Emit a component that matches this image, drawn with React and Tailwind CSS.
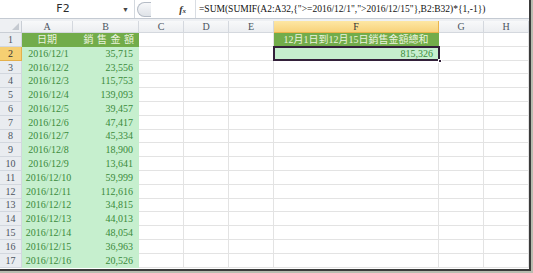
import React from 'react'

const cols = [
  { key: 'A', w: 'w-[51px]' },
  { key: 'B', w: 'w-[66px]' },
  { key: 'C', w: 'w-[45px]' },
  { key: 'D', w: 'w-[45px]' },
  { key: 'E', w: 'w-[45px]' },
  { key: 'F', w: 'w-[165px]' },
  { key: 'G', w: 'w-[45px]' },
  { key: 'H', w: 'w-[45px]' },
]

const sales = [
  35715, 23556, 115753, 139093, 39457, 47417, 45334, 18900,
  13641, 59999, 112616, 34815, 44013, 48054, 36963, 20526,
]

const formula = '=SUM(SUMIF(A2:A32,{">=2016/12/1",">2016/12/15"},B2:B32)*{1,-1})'

const serif = { fontFamily: '"Liberation Serif", "Noto Sans CJK TC", serif' }
const cjk = { fontFamily: '"Liberation Serif", "Noto Sans CJK TC", "Noto Sans CJK SC", serif' }

function Cell({ col, row }) {
  const base = `${col.w} h-full shrink-0 flex items-center border-r border-b`
  if (row === 1) {
    if (col.key === 'A')
      return (
        <div className={`${base} justify-center bg-[#72ac4a] border-[#72ac4a] text-[#eaf3de] text-[10px]`} style={cjk}>日期</div>
      )
    if (col.key === 'B')
      return (
        <div className={`${base} justify-end pr-[4px] bg-[#72ac4a] border-[#72ac4a] text-[#eaf3de] text-[10px]`} style={cjk}>
          <span className="tracking-[3.5px] mr-[-3.5px]">銷售金額</span>
        </div>
      )
    if (col.key === 'F')
      return (
        <div className={`${base} justify-center bg-[#72ac4a] border-[#72ac4a] text-[#eaf3de] text-[10px]`} style={cjk}>12月1日到12月15日銷售金額總和</div>
      )
  }
  if (row >= 2) {
    if (col.key === 'A')
      return (
        <div className={`${base} justify-center pl-[3px] bg-[#c6efce] border-[#c6efce] text-[#3a8a3a] text-[10px]`} style={serif}>
          2016/12/{row - 1}
        </div>
      )
    if (col.key === 'B')
      return (
        <div className={`${base} justify-end pr-[5px] bg-[#c6efce] border-[#c6efce] text-[#3a8a3a] text-[10px]`} style={serif}>
          {sales[row - 2].toLocaleString('en-US')}
        </div>
      )
    if (col.key === 'F' && row === 2)
      return (
        <div className={`${base} relative justify-end pr-[5px] bg-[#c6efce] border-[#c6efce] text-[#3a8a3a] text-[10px]`} style={serif}>
          815,326
          <div className="absolute -left-px -top-px right-[-2px] bottom-[-1px] border-2 border-[#33203a]" />
          <div className="absolute right-[-4px] bottom-[-3px] w-[4px] h-[4px] bg-[#33203a] border border-white" />
        </div>
      )
  }
  return <div className={`${base} bg-white border-[#e3e3e3]`} />
}

export default function App() {
  const rows = Array.from({ length: 17 }, (_, i) => i + 1)
  return (
    <div className="w-[533px] h-[273px] bg-[#b9bcb0] overflow-hidden">
      <div className="w-[531px] h-[271px] bg-white border-r-2 border-b-2 border-[#3a3a3a] flex flex-col overflow-hidden">
        {/* formula bar */}
        <div className="h-[19px] shrink-0 flex items-center border-b border-[#c4cad2] bg-white">
          <div className="w-[135px] h-full flex items-center border-r border-[#d3d8de]">
            <div className="flex-1 text-center text-[11px] text-[#2b2b2b] pl-[4px]" style={{ fontFamily: '"DejaVu Sans", sans-serif' }}>F2</div>
            <div className="w-[12px] text-[7px] text-[#444] leading-none">▼</div>
          </div>
          <div className="w-[60px] h-full flex items-center">
            <div className="ml-[2px] w-[14px] h-[15px] rounded-l-full border border-r-0 border-[#b5bcc6] bg-gradient-to-b from-[#f7f8fa] to-[#dfe3e8]" />
            <div className="flex-1" />
            <div className="mr-[9px] text-[10px] italic font-bold text-[#333]" style={serif}>f<span className="text-[7px]">x</span></div>
          </div>
          <div className="h-full border-l border-[#d9dde3] flex items-center pl-[3px] text-[9.5px] text-[#111] whitespace-nowrap" style={serif}>
            {formula}
          </div>
        </div>
        <div className="h-[2px] shrink-0 bg-[#eef0f3]" />
        {/* column headers */}
        <div className="h-[12px] shrink-0 flex">
          <div className="w-[22px] h-full shrink-0 relative bg-[#eef0f3] border-r border-b border-[#c9ced5]">
            <div className="absolute right-[2px] bottom-[2px] w-0 h-0 border-l-[7px] border-l-transparent border-b-[7px] border-b-[#c5cad1]" />
          </div>
          {cols.map(c => (
            <div
              key={c.key}
              className={`${c.w} h-full shrink-0 flex items-center justify-center text-[10px] leading-none border-r border-b ${
                c.key === 'F'
                  ? 'bg-gradient-to-b from-[#fde7a4] to-[#f8d27a] text-[#333] border-[#e9b54c]'
                  : 'bg-gradient-to-b from-[#f8f9fa] to-[#eceef1] text-[#4c5461] border-[#d4d8de]'
              }`}
              style={serif}
            >
              {c.key}
            </div>
          ))}
        </div>
        {/* rows */}
        {rows.map(r => (
          <div key={r} className="h-[13.8px] shrink-0 flex">
            <div
              className={`w-[22px] h-full shrink-0 flex items-center justify-center text-[10px] border-r border-b ${
                r === 2
                  ? 'bg-[#f6cf72] text-[#333] border-[#e4b04c]'
                  : 'bg-[#e9ecf0] text-[#4c5461] border-[#d2d7de]'
              }`}
              style={serif}
            >
              {r}
            </div>
            {cols.map(c => (
              <Cell key={c.key} col={c} row={r} />
            ))}
          </div>
        ))}
      </div>
    </div>
  )
}
